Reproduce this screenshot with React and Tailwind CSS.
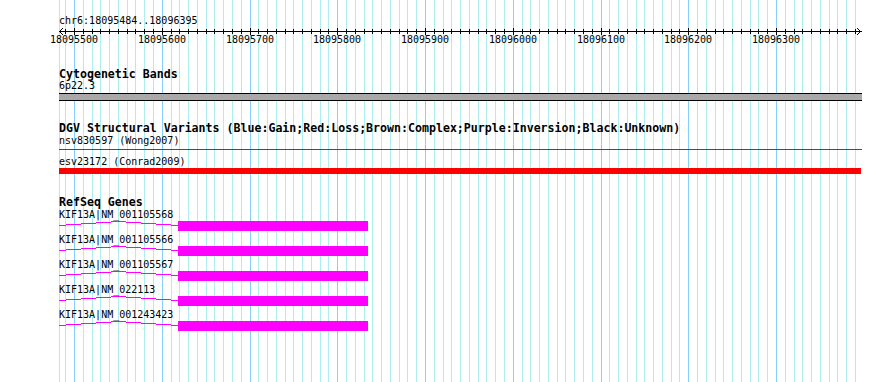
import React from "react";

const START = 18095484;
const END = 18096395;
const px = (bp) => Math.round(74 + (bp - 18095500) * 0.8775);

const gridBps = [];
for (let bp = 18095490; bp <= 18096390; bp += 10) gridBps.push(bp);
const majorBps = gridBps.filter((bp) => bp % 100 === 0);

const genes = [
  "KIF13A|NM_001105568",
  "KIF13A|NM_001105566",
  "KIF13A|NM_001105567",
  "KIF13A|NM_022113",
  "KIF13A|NM_001243423",
];

const mono = "font-['DejaVu_Sans_Mono','Liberation_Mono',monospace]";

// ── background grid ────────────────────────────────────────────────────────
function Grid() {
  return (
    <svg className="absolute inset-0" width="890" height="382" shapeRendering="crispEdges">
      <rect x="59" y="0" width="1" height="382" fill="#afeeee" />
      {gridBps.map((bp) => (
        <rect
          key={bp}
          x={px(bp)}
          y="0"
          width="1"
          height="382"
          fill={bp % 100 === 0 ? "#87cefa" : "#afeeee"}
        />
      ))}
    </svg>
  );
}

function Ruler() {
  return (
    <svg width="890" height="20" className="block" shapeRendering="crispEdges">
      <rect x="59" y="5" width="803" height="1" fill="#000" />
      {gridBps.map((bp) => (
        <rect
          key={bp}
          x={px(bp)}
          y={bp % 100 === 0 ? 2 : 3}
          width="1"
          height={bp % 100 === 0 ? 7 : 5}
          fill="#000"
        />
      ))}
      <polyline points="63,2 59.5,5.5 63,9" fill="none" stroke="#000" strokeWidth="1" />
      <polyline points="857,2 860.5,5.5 857,9" fill="none" stroke="#000" strokeWidth="1" />
      {majorBps.map((bp) => (
        <text
          key={bp}
          x={px(bp)}
          y="17.3"
          textAnchor="middle"
          fontSize="10"
          fontFamily="'DejaVu Sans Mono', monospace"
          fill="#000"
          shapeRendering="auto"
        >
          {bp}
        </text>
      ))}
    </svg>
  );
}

function Title({ children, className = "" }) {
  return (
    <div className={`pl-[59px] h-[12px] text-[11.6px] leading-[12px] font-bold text-black whitespace-nowrap ${className}`}>
      {children}
    </div>
  );
}

function Label({ children, className = "" }) {
  return (
    <div className={`pl-[59px] h-[10px] text-[10px] leading-[10px] text-black whitespace-nowrap ${className}`}>
      {children}
    </div>
  );
}

function GeneRow({ name }) {
  return (
    <div className="h-[25px]">
      <Label>{name}</Label>
      <svg width="890" height="10" className="block mt-[1px]" shapeRendering="crispEdges">
        <polyline points="59,4.5 118.5,0.5 178,4.5" fill="none" stroke="#ff00ff" strokeWidth="1" />
        <rect x="178" y="0" width="190" height="10" fill="#ff00ff" />
      </svg>
    </div>
  );
}

export default function App() {
  return (
    <div className={`relative w-[890px] h-[382px] overflow-hidden bg-white ${mono}`}>
      <Grid />
      <div className="relative flex flex-col pt-[16px]">
        <Label>
          chr6:{START}..{END}
        </Label>
        <Ruler />

        <Title className="mt-[22px]">Cytogenetic Bands</Title>
        <Label className="mt-[1px]">6p22.3</Label>
        <div className="mt-[2px] ml-[59px] w-[803px] h-[8px] bg-[#a9a9a9] border-y border-black" />

        <Title className="mt-[21px]">
          DGV Structural Variants (Blue:Gain;Red:Loss;Brown:Complex;Purple:Inversion;Black:Unknown)
        </Title>
        <Label className="mt-[2px]">nsv830597 (Wong2007)</Label>
        <div className="mt-[3px] ml-[59px] w-[803px] h-[1px] bg-[#ff0000]" />
        <Label className="mt-[7px]">esv23172 (Conrad2009)</Label>
        <div className="mt-[1px] ml-[59px] w-[802px] h-[6px] bg-[#ff0000]" />

        <Title className="mt-[22px]">RefSeq Genes</Title>
        <div className="mt-[2px] flex flex-col">
          {genes.map((g) => (
            <GeneRow key={g} name={g} />
          ))}
        </div>
      </div>
    </div>
  );
}
